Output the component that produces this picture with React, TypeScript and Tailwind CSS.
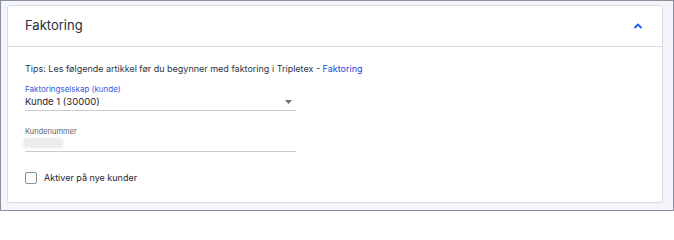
import React from "react";

export default function App() {
  return (
    <div
      className="w-[674px] h-[211px] bg-[#f4f5fa] border border-[#8a8f9b] pt-[4px] pl-[6px] pr-[10px] pb-[7px]"
      style={{ fontFamily: "Inter, 'Noto Sans', sans-serif" }}
    >
      <div className="h-full bg-white border border-[#d8d9de] rounded-[3px] flex flex-col">
        <div className="h-[41px] flex items-center justify-between pl-[17px] pr-[18px] border-b border-[#d8d9de]">
          <span className="text-[13px] text-[#272d3a]">Faktoring</span>
          <svg width="10" height="6" viewBox="0 0 10 6" className="mr-[1px]">
            <path d="M1.5 5 L5 1.5 L8.5 5" fill="none" stroke="#1f5cff" strokeWidth="1.8" />
          </svg>
        </div>
        <div className="pl-[17px] pt-[16px] flex flex-col">
          <div className="text-[9px] leading-[12px] text-[#2f3440]">
            Tips: Les følgende artikkel før du begynner med faktoring i Tripletex -{" "}
            <span className="text-[#1a48e0]">Faktoring</span>
          </div>
          <div className="mt-[9px] w-[271px] border-b border-[#c9cbd1] pb-[1px]">
            <div className="text-[8px] leading-[11px] text-[#3658d8]">Faktoringselskap (kunde)</div>
            <div className="flex items-center justify-between pr-[4px]">
              <span className="text-[9.5px] leading-[14px] text-[#1f2430]">Kunde 1 (30000)</span>
              <svg width="7" height="4" viewBox="0 0 7 4">
                <path d="M0 0 L7 0 L3.5 4 Z" fill="#6b6f78" />
              </svg>
            </div>
          </div>
          <div className="mt-[15px] w-[271px] border-b border-[#c9cbd1] pb-[3px]">
            <div className="text-[7.5px] leading-[11px] text-[#5b606b]">Kundenummer</div>
            <div className="mt-[1px] ml-[-2px] w-[40px] h-[10px] bg-[#ececee] rounded-[2px] blur-[1px]" />
          </div>
          <label className="mt-[20px] flex items-center gap-[7px]">
            <span className="w-[12px] h-[12px] border border-[#8a8f9b] rounded-[2px] bg-white" />
            <span className="text-[9px] leading-[12px] text-[#1f2430]">Aktiver på nye kunder</span>
          </label>
        </div>
      </div>
    </div>
  );
}
